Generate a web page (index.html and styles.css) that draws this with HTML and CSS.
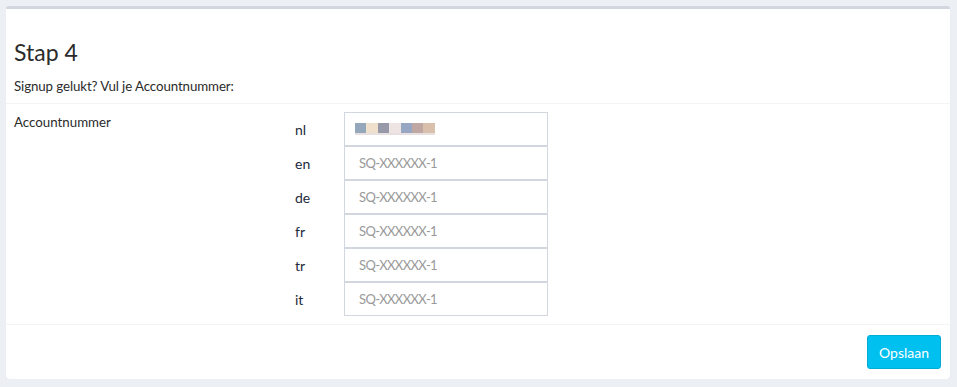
FILE: index.html
```html
<!DOCTYPE html>
<html lang="nl">
<head>
  <meta charset="UTF-8">
  <meta name="viewport" content="width=device-width, initial-scale=1.0">
  <title>Stap 4 - Signup</title>
  <link rel="stylesheet" href="styles.css">
</head>
<body>
  <div class="box">
    <div class="box-header">
      <h3>Stap 4</h3>
      <p>Signup gelukt? Vul je Accountnummer:</p>
    </div>

    <form class="box-body">
      <label class="field-label">Accountnummer</label>
      <div class="lang-list">
        <div class="lang-row">
          <span class="lang">nl</span>
          <div class="input filled">
            <span class="blur">
              <i style="background:#94a7bb"></i><i style="background:#efe0cc"></i><i style="background:#9798a8"></i><i style="background:#ede4e3"></i><i style="background:#97a6c3"></i><i style="background:#bfa7a4"></i><i style="background:#d9c0ac"></i>
            </span>
          </div>
        </div>
        <div class="lang-row">
          <span class="lang">en</span>
          <input type="text" placeholder="SQ-XXXXXX-1">
        </div>
        <div class="lang-row">
          <span class="lang">de</span>
          <input type="text" placeholder="SQ-XXXXXX-1">
        </div>
        <div class="lang-row">
          <span class="lang">fr</span>
          <input type="text" placeholder="SQ-XXXXXX-1">
        </div>
        <div class="lang-row">
          <span class="lang">tr</span>
          <input type="text" placeholder="SQ-XXXXXX-1">
        </div>
        <div class="lang-row">
          <span class="lang">it</span>
          <input type="text" placeholder="SQ-XXXXXX-1">
        </div>
      </div>
    </form>

    <div class="box-footer">
      <button type="button">Opslaan</button>
    </div>
  </div>
</body>
</html>
```

FILE: styles.css
```css
* {
  box-sizing: border-box;
  margin: 0;
  padding: 0;
}

body {
  font-family: 'Lato', 'Open Sans', sans-serif;
  font-size: 13.3px;
  color: #2b2b2b;
  background: #ecf0f5;
  padding: 6px 7px 0 6px;
}

.box {
  background: #fff;
  border-top: 3px solid #d2d6de;
  border-radius: 3px;
  box-shadow: 0 1px 1px rgba(0, 0, 0, 0.1);
}

.box-header {
  padding: 30px 8px 7px 8px;
  border-bottom: 1px solid #f4f4f4;
}

.box-header h3 {
  font-size: 23px;
  font-weight: 400;
  line-height: 26px;
  margin-bottom: 11px;
}

.box-header p {
  line-height: 20px;
  letter-spacing: -0.1px;
}

.box-body {
  display: flex;
  padding: 8px;
  border-bottom: 1px solid #f4f4f4;
}

.field-label {
  width: 281px;
  line-height: 20px;
}

.lang-list {
  display: flex;
  flex-direction: column;
}

.lang-row {
  display: flex;
  align-items: center;
}

.lang {
  width: 49px;
  font-size: 14px;
  color: #232a3c;
}

input[type="text"],
.input {
  width: 204px;
  height: 34px;
  border: 1px solid #d2d6de;
  padding: 6px 14px;
  font-family: 'Lato', 'Open Sans', sans-serif;
  font-size: 13px;
  letter-spacing: -0.6px;
  color: #555;
  outline: none;
}

input::placeholder {
  color: #999;
}

.input {
  display: flex;
  align-items: center;
  padding-left: 10px;
}

.blur {
  display: flex;
  height: 12px;
  border-bottom: 2px solid #e8e0e0;
}

.blur i {
  width: 11.4px;
  height: 10px;
}

.box-footer {
  display: flex;
  justify-content: flex-end;
  padding: 10px 9px 10px 10px;
}

button {
  background-color: #00c0ef;
  border: 1px solid #00acd6;
  color: #fff;
  font-family: 'Lato', 'Open Sans', sans-serif;
  font-size: 14px;
  height: 34px;
  width: 74px;
  border-radius: 3px;
  cursor: pointer;
}
```
